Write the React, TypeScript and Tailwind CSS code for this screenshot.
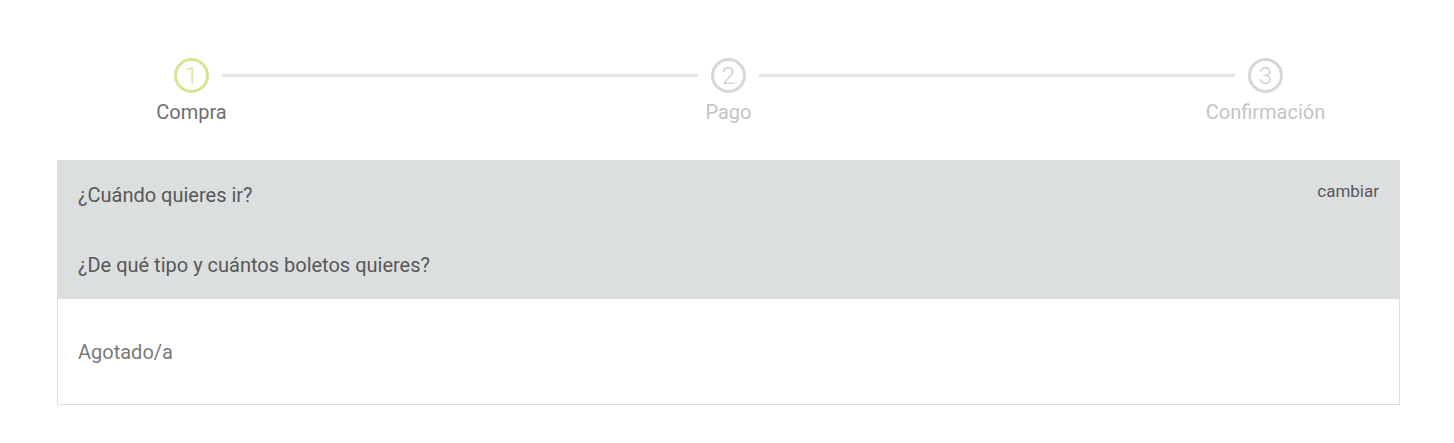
const steps = [
  { n: 1, label: "Compra", active: true },
  { n: 2, label: "Pago", active: false },
  { n: 3, label: "Confirmación", active: false },
];

function Step({ n, label, active }: { n: number; label: string; active: boolean }) {
  return (
    <div className="flex flex-col items-center w-[35px] shrink-0">
      <div
        className={
          active
            ? "w-[35px] h-[35px] rounded-full border-[3px] border-[#d5e490] text-[#d5e490] flex items-center justify-center text-[24px] font-light leading-none"
            : "w-[35px] h-[35px] rounded-full border-[3px] border-[#d6d6d6] text-[#cdcdcd] flex items-center justify-center text-[24px] font-light leading-none"
        }
      >
        {n}
      </div>
      <span
        className={
          active
            ? "mt-[8px] whitespace-nowrap text-[20px] leading-[22px] text-[#6e6e6e]"
            : "mt-[8px] whitespace-nowrap text-[20px] leading-[22px] text-[#c4c4c4]"
        }
      >
        {label}
      </span>
    </div>
  );
}

export default function App() {
  return (
    <div className="min-h-screen bg-white font-['Roboto',sans-serif]">
      <div className="ml-[57px] w-[1343px] pt-[58px]">
        {/* Stepper */}
        <div className="flex items-start px-[117px]">
          {steps.map((s, i) => (
            <div key={s.n} className={i < steps.length - 1 ? "flex items-start flex-1" : "flex items-start"}>
              <Step {...s} />
              {i < steps.length - 1 && (
                <div className="flex-1 h-[3px] bg-[#e4e4e4] mt-[16px] ml-[13px] mr-[13px]" />
              )}
            </div>
          ))}
        </div>

        {/* Selection summary */}
        <div className="mt-[37px] bg-[#dcdfe0]">
          <div className="h-[70px] flex items-center justify-between px-[21px]">
            <span className="text-[20px] text-[#585858]">¿Cuándo quieres ir?</span>
            <button className="mb-[6px] text-[17px] text-[#585858]">cambiar</button>
          </div>
          <div className="h-[69px] flex items-center px-[21px]">
            <span className="text-[20px] text-[#585858]">¿De qué tipo y cuántos boletos quieres?</span>
          </div>
        </div>
        <div className="h-[106px] flex items-center px-[20px] border border-t-0 border-[#dedede]">
          <span className="text-[20px] text-[#7a7a7a]">Agotado/a</span>
        </div>
      </div>
    </div>
  );
}
